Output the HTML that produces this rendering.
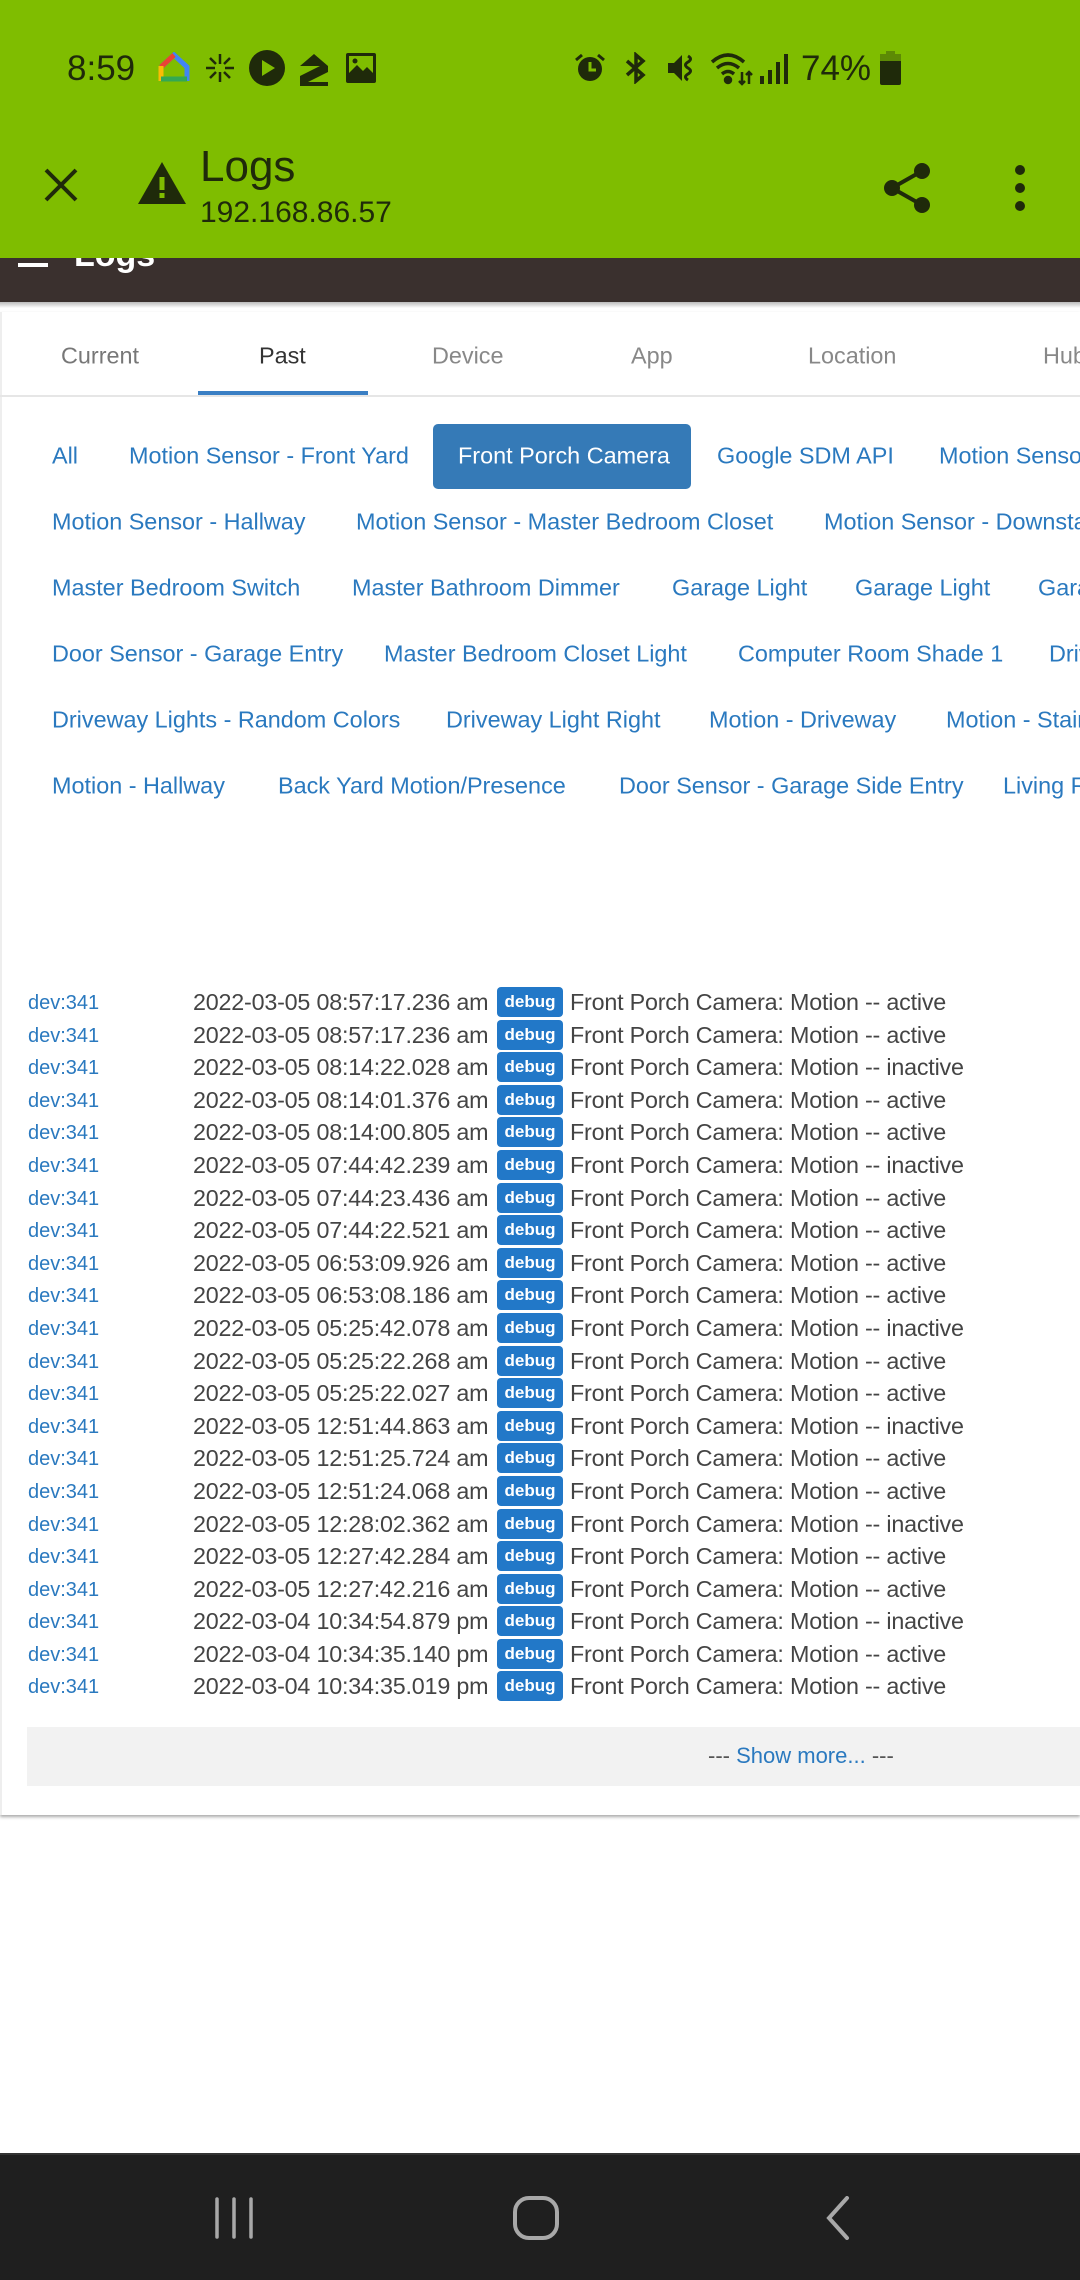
<!DOCTYPE html>
<html><head><meta charset="utf-8"><style>
*{margin:0;padding:0;box-sizing:border-box}
body{width:1080px;height:2280px;position:relative;background:#fff;font-family:"Liberation Sans",sans-serif;overflow:hidden}
.a{position:absolute;white-space:nowrap}
.clip{position:absolute;left:0;top:0;width:1080px;height:2280px;overflow:hidden}
.g{background:#7fbd00;position:absolute;left:0;top:0;width:1080px;height:258px}
.dk{color:#1f2a0a}
.f{position:absolute;color:#2a79bf;font-size:23.4px;transform:translateY(-50%);white-space:nowrap}
.row{position:absolute;left:0;width:1080px;height:32px;font-size:23.3px;color:#444;white-space:nowrap}
.row .d{position:absolute;left:28px;top:7px;font-size:20px;color:#2a79bf}
.row .t{position:absolute;left:193px;top:4px;letter-spacing:-0.2px}
.row .b{position:absolute;left:497px;top:2px;width:66px;height:30px;background:#2278c8;border-radius:4px;color:#fff;font-weight:bold;font-size:17px;text-align:center;line-height:30px}
.row .m{position:absolute;left:570px;top:4px;letter-spacing:-0.2px}
</style></head><body>
<div class="clip">
<div class="g"></div>
<div class="a dk" style="left:67px;top:49px;font-size:35px">8:59</div>
<svg class="a" style="left:158px;top:52px" width="32" height="32" viewBox="0 0 32 32"><path d="M3 15 L16 3 L29 15 V29" fill="none" stroke="#4285f4" stroke-width="5"/><path d="M3 15 L16 3" stroke="#ea4335" stroke-width="5"/><path d="M3 14 V29" stroke="#fbbc05" stroke-width="5"/><path d="M3 27 H29" stroke="#34a853" stroke-width="5"/></svg>
<svg class="a" style="left:204px;top:52px" width="32" height="32" viewBox="0 0 32 32" stroke="#1f2a0a" stroke-width="2.5" fill="none"><path d="M16 2v10M16 20v10M2 16h9M21 16h9M6 6l6 6M20 20l6 6M26 6l-6 6M6 26l6-6"/></svg>
<svg class="a" style="left:249px;top:50px" width="36" height="36" viewBox="0 0 36 36"><circle cx="18" cy="18" r="18" fill="#1f2a0a"/><path d="M13 10v16l13-8z" fill="#7fbd00"/></svg>
<svg class="a" style="left:298px;top:52px" width="32" height="34" viewBox="0 0 32 34"><path d="M2 14 L16 2 L30 14 V20 L10 30 H30 V34 H2 V24 L22 14 H2z" fill="#1f2a0a"/></svg>
<svg class="a" style="left:346px;top:53px" width="30" height="30" viewBox="0 0 30 30"><rect width="30" height="30" rx="2" fill="#1f2a0a"/><rect x="3" y="3" width="24" height="17" fill="#7fbd00"/><path d="M3 20 L11 12 L17 18 L21 14 L27 20z" fill="#1f2a0a"/><circle cx="9" cy="8" r="2.5" fill="#1f2a0a"/></svg>
<svg class="a" style="left:574px;top:52px" width="32" height="32" viewBox="0 0 32 32"><circle cx="16" cy="17" r="12" fill="#1f2a0a"/><path d="M16 10v8h6" stroke="#7fbd00" stroke-width="3" fill="none"/><path d="M2 8l6-5M30 8l-6-5" stroke="#1f2a0a" stroke-width="3"/></svg>
<svg class="a" style="left:622px;top:52px" width="28" height="32" viewBox="0 0 28 32" stroke="#1f2a0a" stroke-width="3.5" fill="none"><path d="M5 9l16 14-7 6V3l7 6L5 23"/></svg>
<svg class="a" style="left:666px;top:52px" width="32" height="32" viewBox="0 0 32 32"><path d="M2 11h6l8-8v26l-8-8H2z" fill="#1f2a0a"/><path d="M22 4q5 3 0 6t0 6t0 6t0 6" stroke="#1f2a0a" stroke-width="3" fill="none"/></svg>
<svg class="a" style="left:710px;top:50px" width="44" height="36" viewBox="0 0 44 36" stroke="#1f2a0a" stroke-width="3.5" fill="none"><path d="M2 12q16-14 32 0M7 18q11-9 22 0M12 24q6-5 12 0"/><circle cx="18" cy="30" r="2.5" fill="#1f2a0a"/><path d="M32 22v12M29 31l3 3 3-3M39 34V22M36 25l3-3 3 3" stroke-width="2.5"/></svg>
<svg class="a" style="left:760px;top:54px" width="28" height="30" viewBox="0 0 28 30" fill="#1f2a0a"><rect x="0" y="22" width="4" height="8"/><rect x="8" y="16" width="4" height="14"/><rect x="16" y="8" width="4" height="22"/><rect x="24" y="0" width="4" height="30"/></svg>
<div class="a dk" style="left:801px;top:49px;font-size:35px">74%</div>
<svg class="a" style="left:880px;top:51px" width="21" height="34" viewBox="0 0 21 34"><rect x="6" y="0" width="9" height="4" fill="#5d8a05"/><rect x="0" y="3" width="21" height="31" rx="2" fill="#1f2a0a"/><rect x="0" y="3" width="21" height="7" fill="#5d8a05"/></svg>

<svg class="a" style="left:42px;top:166px" width="38" height="38" viewBox="0 0 38 38" stroke="#1f2a0a" stroke-width="4"><path d="M4 4l30 30M34 4L4 34"/></svg>
<svg class="a" style="left:138px;top:162px" width="48" height="42" viewBox="0 0 48 42"><path d="M24 0L48 42H0z" fill="#1f2a0a"/><rect x="21.5" y="15" width="5" height="13" fill="#7fbd00"/><rect x="21.5" y="31" width="5" height="5" fill="#7fbd00"/></svg>
<div class="a dk" style="left:200px;top:142px;font-size:44px">Logs</div>
<div class="a dk" style="left:200px;top:196px;font-size:30px">192.168.86.57</div>
<svg class="a" style="left:882px;top:162px" width="50" height="52" viewBox="0 0 50 52" fill="#1f2a0a"><circle cx="40" cy="9" r="8"/><circle cx="10" cy="26" r="8"/><circle cx="40" cy="43" r="8"/><path d="M40 9L10 26L40 43" stroke="#1f2a0a" stroke-width="4" fill="none"/></svg>
<svg class="a" style="left:1012px;top:164px" width="16" height="48" viewBox="0 0 16 48" fill="#1f2a0a"><circle cx="8" cy="6" r="5"/><circle cx="8" cy="24" r="5"/><circle cx="8" cy="42" r="5"/></svg>

<div class="a" style="left:0;top:258px;width:1080px;height:44px;background:#3a302e;overflow:hidden">
<div class="a" style="left:18px;top:5px;width:30px;height:4px;background:#fff"></div>
<div class="a" style="left:74px;top:-22px;font-size:34px;color:#fff;font-weight:bold">Logs</div></div>
<div class="a" style="left:0;top:302px;width:1080px;height:6px;background:linear-gradient(#bbb,#fff)"></div>

<div class="a" style="left:0;top:312px;width:1080px;height:1503px;border-left:2px solid #eee;box-shadow:0 2px 3px #aaa"></div>
<div class="a" style="left:0;top:395px;width:1080px;height:2px;background:#e6e6e6"></div>
<div class="a" style="left:198px;top:391px;width:170px;height:4px;background:#3a7fc4"></div>
<div class="f" style="left:61px;top:356px;color:#777">Current</div>
<div class="f" style="left:259px;top:356px;color:#333">Past</div>
<div class="f" style="left:432px;top:356px;color:#888">Device</div>
<div class="f" style="left:631px;top:356px;color:#888">App</div>
<div class="f" style="left:808px;top:356px;color:#888">Location</div>
<div class="f" style="left:1043px;top:356px;color:#888">Hub</div>

<div class="a" style="left:433px;top:424px;width:258px;height:65px;background:#357ab7;border-radius:5px"></div>
<div class="f" style="left:52px;top:456px">All</div>
<div class="f" style="left:129px;top:456px">Motion Sensor - Front Yard</div>
<div class="f" style="left:458px;top:456px;color:#fff">Front Porch Camera</div>
<div class="f" style="left:717px;top:456px">Google SDM API</div>
<div class="f" style="left:939px;top:456px">Motion Sensor</div>
<div class="f" style="left:52px;top:522px">Motion Sensor - Hallway</div>
<div class="f" style="left:356px;top:522px">Motion Sensor - Master Bedroom Closet</div>
<div class="f" style="left:824px;top:522px">Motion Sensor - Downstairs</div>
<div class="f" style="left:52px;top:588px">Master Bedroom Switch</div>
<div class="f" style="left:352px;top:588px">Master Bathroom Dimmer</div>
<div class="f" style="left:672px;top:588px">Garage Light</div>
<div class="f" style="left:855px;top:588px">Garage Light</div>
<div class="f" style="left:1038px;top:588px">Garage</div>
<div class="f" style="left:52px;top:654px">Door Sensor - Garage Entry</div>
<div class="f" style="left:384px;top:654px">Master Bedroom Closet Light</div>
<div class="f" style="left:738px;top:654px">Computer Room Shade 1</div>
<div class="f" style="left:1049px;top:654px">Driveway</div>
<div class="f" style="left:52px;top:720px">Driveway Lights - Random Colors</div>
<div class="f" style="left:446px;top:720px">Driveway Light Right</div>
<div class="f" style="left:709px;top:720px">Motion - Driveway</div>
<div class="f" style="left:946px;top:720px">Motion - Stairs</div>
<div class="f" style="left:52px;top:786px">Motion - Hallway</div>
<div class="f" style="left:278px;top:786px">Back Yard Motion/Presence</div>
<div class="f" style="left:619px;top:786px">Door Sensor - Garage Side Entry</div>
<div class="f" style="left:1003px;top:786px">Living Room</div>

<div class="row" style="top:985px"><span class="d">dev:341</span><span class="t">2022-03-05 08:57:17.236 am</span><span class="b">debug</span><span class="m">Front Porch Camera: Motion -- active</span></div>
<div class="row" style="top:1018px"><span class="d">dev:341</span><span class="t">2022-03-05 08:57:17.236 am</span><span class="b">debug</span><span class="m">Front Porch Camera: Motion -- active</span></div>
<div class="row" style="top:1050px"><span class="d">dev:341</span><span class="t">2022-03-05 08:14:22.028 am</span><span class="b">debug</span><span class="m">Front Porch Camera: Motion -- inactive</span></div>
<div class="row" style="top:1083px"><span class="d">dev:341</span><span class="t">2022-03-05 08:14:01.376 am</span><span class="b">debug</span><span class="m">Front Porch Camera: Motion -- active</span></div>
<div class="row" style="top:1115px"><span class="d">dev:341</span><span class="t">2022-03-05 08:14:00.805 am</span><span class="b">debug</span><span class="m">Front Porch Camera: Motion -- active</span></div>
<div class="row" style="top:1148px"><span class="d">dev:341</span><span class="t">2022-03-05 07:44:42.239 am</span><span class="b">debug</span><span class="m">Front Porch Camera: Motion -- inactive</span></div>
<div class="row" style="top:1181px"><span class="d">dev:341</span><span class="t">2022-03-05 07:44:23.436 am</span><span class="b">debug</span><span class="m">Front Porch Camera: Motion -- active</span></div>
<div class="row" style="top:1213px"><span class="d">dev:341</span><span class="t">2022-03-05 07:44:22.521 am</span><span class="b">debug</span><span class="m">Front Porch Camera: Motion -- active</span></div>
<div class="row" style="top:1246px"><span class="d">dev:341</span><span class="t">2022-03-05 06:53:09.926 am</span><span class="b">debug</span><span class="m">Front Porch Camera: Motion -- active</span></div>
<div class="row" style="top:1278px"><span class="d">dev:341</span><span class="t">2022-03-05 06:53:08.186 am</span><span class="b">debug</span><span class="m">Front Porch Camera: Motion -- active</span></div>
<div class="row" style="top:1311px"><span class="d">dev:341</span><span class="t">2022-03-05 05:25:42.078 am</span><span class="b">debug</span><span class="m">Front Porch Camera: Motion -- inactive</span></div>
<div class="row" style="top:1344px"><span class="d">dev:341</span><span class="t">2022-03-05 05:25:22.268 am</span><span class="b">debug</span><span class="m">Front Porch Camera: Motion -- active</span></div>
<div class="row" style="top:1376px"><span class="d">dev:341</span><span class="t">2022-03-05 05:25:22.027 am</span><span class="b">debug</span><span class="m">Front Porch Camera: Motion -- active</span></div>
<div class="row" style="top:1409px"><span class="d">dev:341</span><span class="t">2022-03-05 12:51:44.863 am</span><span class="b">debug</span><span class="m">Front Porch Camera: Motion -- inactive</span></div>
<div class="row" style="top:1441px"><span class="d">dev:341</span><span class="t">2022-03-05 12:51:25.724 am</span><span class="b">debug</span><span class="m">Front Porch Camera: Motion -- active</span></div>
<div class="row" style="top:1474px"><span class="d">dev:341</span><span class="t">2022-03-05 12:51:24.068 am</span><span class="b">debug</span><span class="m">Front Porch Camera: Motion -- active</span></div>
<div class="row" style="top:1507px"><span class="d">dev:341</span><span class="t">2022-03-05 12:28:02.362 am</span><span class="b">debug</span><span class="m">Front Porch Camera: Motion -- inactive</span></div>
<div class="row" style="top:1539px"><span class="d">dev:341</span><span class="t">2022-03-05 12:27:42.284 am</span><span class="b">debug</span><span class="m">Front Porch Camera: Motion -- active</span></div>
<div class="row" style="top:1572px"><span class="d">dev:341</span><span class="t">2022-03-05 12:27:42.216 am</span><span class="b">debug</span><span class="m">Front Porch Camera: Motion -- active</span></div>
<div class="row" style="top:1604px"><span class="d">dev:341</span><span class="t">2022-03-04 10:34:54.879 pm</span><span class="b">debug</span><span class="m">Front Porch Camera: Motion -- inactive</span></div>
<div class="row" style="top:1637px"><span class="d">dev:341</span><span class="t">2022-03-04 10:34:35.140 pm</span><span class="b">debug</span><span class="m">Front Porch Camera: Motion -- active</span></div>
<div class="row" style="top:1669px"><span class="d">dev:341</span><span class="t">2022-03-04 10:34:35.019 pm</span><span class="b">debug</span><span class="m">Front Porch Camera: Motion -- active</span></div>

<div class="a" style="left:27px;top:1727px;width:1053px;height:59px;background:#f2f2f2"></div>
<div class="a" style="left:708px;top:1743px;font-size:22px;color:#555">--- <span style="color:#2a79bf">Show more...</span> ---</div>

<div class="a" style="left:0;top:2153px;width:1080px;height:127px;background:#1f1f1f;border-top:2px solid #333"></div>
<svg class="a" style="left:212px;top:2196px" width="44" height="44" viewBox="0 0 44 44" stroke="#a8a8a8" stroke-width="3.5" stroke-linecap="round"><path d="M5 3v38M22 3v38M39 3v38"/></svg>
<svg class="a" style="left:512px;top:2196px" width="48" height="44" viewBox="0 0 48 44"><rect x="3" y="2" width="42" height="40" rx="14" fill="none" stroke="#a8a8a8" stroke-width="4"/></svg>
<svg class="a" style="left:823px;top:2196px" width="30" height="44" viewBox="0 0 30 44"><path d="M24 2L6 22l18 20" fill="none" stroke="#a8a8a8" stroke-width="4" stroke-linecap="round"/></svg>
</div>
</body></html>
